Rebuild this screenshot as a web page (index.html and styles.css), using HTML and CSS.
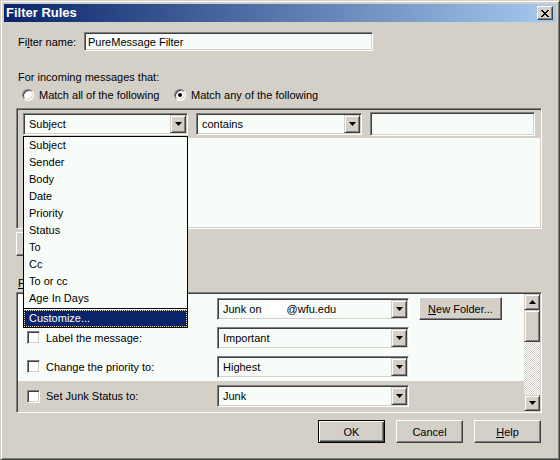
FILE: index.html
```html
<!DOCTYPE html>
<html>
<head>
<meta charset="utf-8">
<title>Filter Rules</title>
<link rel="stylesheet" href="styles.css">
</head>
<body>
<div class="window">
  <div class="titlebar">
    <span class="title">Filter Rules</span>
    <span class="close"><svg width="8" height="7" viewBox="0 0 8 7"><path d="M0 0h2v1H0z M6 0h2v1H6z M1 1h2v1H1z M5 1h2v1H5z M2 2h4v1H2z M3 3h2v1H3z M2 4h4v1H2z M1 5h2v1H1z M5 5h2v1H5z M0 6h2v1H0z M6 6h2v1H6z" fill="#000"/></svg></span>
  </div>
  <div class="content">
    <div class="name-row">
      <label class="name-label">Fi<u>l</u>ter name:</label>
      <div class="field name-field">PureMessage Filter</div>
    </div>
    <div class="incoming">For incoming messages that:</div>
    <div class="radios">
      <span class="radio-item first"><span class="radio"></span>Match all of the following</span>
      <span class="radio-item"><span class="radio checked"></span>Match any of the following</span>
    </div>
    <div class="panel criteria">
      <div class="crit-row">
        <div class="field combo w165"><span class="val">Subject</span><span class="arrow"><svg width="7" height="4" viewBox="0 0 7 4"><path d="M0 0h7L3.5 4z" fill="#000"/></svg></span></div>
        <div class="field combo w166"><span class="val">contains</span><span class="arrow"><svg width="7" height="4" viewBox="0 0 7 4"><path d="M0 0h7L3.5 4z" fill="#000"/></svg></span></div>
        <div class="field textbox"></div>
      </div>
      <div class="crit-list"></div>
    </div>
    <div class="more-row">
      <span class="btn more">More</span>
      <span class="btn more">Fewer</span>
    </div>
    <div class="actions-label"><u>P</u>erform these actions:</div>
    <div class="panel actions">
      <div class="rows">
        <div class="arow">
          <div class="acell"><span class="check"></span><span>Move to folder:</span></div>
          <div class="field combo w192"><span class="val">Junk on <span class="redact"></span> @wfu.edu</span><span class="arrow"><svg width="7" height="4" viewBox="0 0 7 4"><path d="M0 0h7L3.5 4z" fill="#000"/></svg></span></div>
          <span class="btn newfolder"><span><u>N</u>ew Folder...</span></span>
        </div>
        <div class="arow">
          <div class="acell"><span class="check"></span><span>Label the message:</span></div>
          <div class="field combo w192"><span class="val">Important</span><span class="arrow"><svg width="7" height="4" viewBox="0 0 7 4"><path d="M0 0h7L3.5 4z" fill="#000"/></svg></span></div>
        </div>
        <div class="arow">
          <div class="acell"><span class="check"></span><span>Change the priority to:</span></div>
          <div class="field combo w192"><span class="val">Highest</span><span class="arrow"><svg width="7" height="4" viewBox="0 0 7 4"><path d="M0 0h7L3.5 4z" fill="#000"/></svg></span></div>
        </div>
        <div class="arow sel">
          <div class="acell"><span class="check"></span><span>Set Junk Status to:</span></div>
          <div class="field combo w192"><span class="val">Junk</span><span class="arrow"><svg width="7" height="4" viewBox="0 0 7 4"><path d="M0 0h7L3.5 4z" fill="#000"/></svg></span></div>
        </div>
      </div>
      <div class="scrollbar">
        <span class="sb-btn"><svg width="7" height="4" viewBox="0 0 7 4"><path d="M3.5 0L7 4H0z" fill="#000"/></svg></span>
        <span class="thumb"></span>
        <span class="track"></span>
        <span class="sb-btn"><svg width="7" height="4" viewBox="0 0 7 4"><path d="M0 0h7L3.5 4z" fill="#000"/></svg></span>
      </div>
    </div>
    <div class="buttons">
      <span class="btn dlg default">OK</span>
      <span class="btn dlg">Cancel</span>
      <span class="btn dlg"><span><u>H</u>elp</span></span>
    </div>
  </div>
  <div class="dropdown">
    <div class="item">Subject</div>
    <div class="item">Sender</div>
    <div class="item">Body</div>
    <div class="item">Date</div>
    <div class="item">Priority</div>
    <div class="item">Status</div>
    <div class="item">To</div>
    <div class="item">Cc</div>
    <div class="item">To or cc</div>
    <div class="item">Age In Days</div>
    <div class="sep"></div>
    <div class="item hl">Customize...</div>
  </div>
</div>
</body>
</html>
```
FILE: styles.css
```css
* { box-sizing: border-box; }
html, body { margin: 0; padding: 0; }
body {
  width: 560px;
  height: 460px;
  overflow: hidden;
  background: #d4d0c8;
  font-family: "Liberation Sans", Arial, sans-serif;
  font-size: 11px;
  line-height: 14px;
  color: #000;
}
u { text-decoration: underline; text-underline-offset: 1px; }

.window {
  position: relative;
  width: 560px;
  height: 460px;
  background: #d4d0c8;
  border: 1px solid;
  border-color: #d4d0c8 #404040 #404040 #d4d0c8;
  box-shadow: inset 1px 1px #fff, inset -1px -1px #808080;
  padding: 3px;
}

.titlebar {
  height: 18px;
  background: linear-gradient(to right, #0a246a, #a6caf0);
  display: flex;
  align-items: center;
  justify-content: space-between;
  padding: 0 3px 0 2px;
}
.title {
  color: #fff;
  font-weight: bold;
  font-size: 13px;
}
.close {
  width: 16px;
  height: 14px;
  background: #d4d0c8;
  border: 1px solid;
  border-color: #fff #404040 #404040 #fff;
  box-shadow: inset -1px -1px #808080;
  display: flex;
  align-items: center;
  justify-content: center;
  padding-right: 1px;
}
.close svg { display: block; }

.content { padding: 0 0 0 12px; }

.field {
  background: #f8fcf8;
  border: 1px solid;
  border-color: #808080 #fff #fff #808080;
  box-shadow: inset 1px 1px #404040, inset -1px -1px #d4d0c8;
}

.name-row {
  display: flex;
  align-items: center;
  margin-top: 10px;
  padding-left: 2px;
}
.name-label { width: 66px; }
.name-field {
  width: 289px;
  height: 19px;
  padding-left: 3px;
  display: flex;
  align-items: center;
}

.incoming {
  margin-top: 19px;
  padding-left: 2px;
  height: 14px;
}

.radios {
  margin-top: 4px;
  height: 14px;
  display: flex;
  align-items: center;
  padding-left: 6px;
}
.radio-item {
  display: flex;
  align-items: center;
  gap: 5px;
}
.radio-item.first { width: 152px; }
.radio {
  position: relative;
  width: 12px;
  height: 12px;
  border-radius: 50%;
  background: #fff;
  border: 1px solid;
  border-color: #808080 #fff #fff #808080;
  box-shadow: inset 1px 1px #404040, inset -1px -1px #d4d0c8;
}
.radio.checked::after {
  content: "";
  position: absolute;
  left: 3px;
  top: 3px;
  width: 4px;
  height: 4px;
  border-radius: 50%;
  background: #000;
}

.panel {
  width: 526px;
  height: 121px;
  border: 1px solid;
  border-color: #808080 #fff #fff #808080;
  box-shadow: inset 1px 1px #404040, inset -1px -1px #d4d0c8;
  padding: 1px;
}
.criteria { margin-top: 6px; background: #d4d0c8; }
.crit-row {
  height: 28px;
  display: flex;
  align-items: center;
  gap: 8px;
  padding-left: 5px;
}
.crit-list {
  height: 89px;
  margin-left: 5px;
  background: #f8fcf8;
}

.combo {
  height: 22px;
  display: flex;
  align-items: stretch;
  padding: 1px 1px 1px 5px;
}
.combo .val {
  flex: 1;
  display: flex;
  align-items: center;
  white-space: nowrap;
  overflow: hidden;
}
.combo .arrow {
  width: 16px;
  background: #d4d0c8;
  border: 1px solid;
  border-color: #d4d0c8 #404040 #404040 #d4d0c8;
  box-shadow: inset 1px 1px #fff, inset -1px -1px #808080;
  display: flex;
  align-items: center;
  justify-content: center;
}
.combo .arrow svg, .sb-btn svg { display: block; }
.w165 { width: 165px; }
.w166 { width: 166px; }
.w192 { width: 192px; }
.textbox { width: 165px; height: 24px; }
.redact {
  display: inline-block;
  width: 25px;
  height: 13px;
  background: #fff;
  vertical-align: middle;
}

.btn {
  display: flex;
  align-items: center;
  justify-content: center;
  background: #d4d0c8;
  border: 1px solid;
  border-color: #fff #404040 #404040 #fff;
  box-shadow: inset -1px -1px #808080;
  white-space: nowrap;
}

.more-row {
  margin-top: 3px;
  height: 24px;
  display: flex;
  gap: 6px;
}
.btn.more { width: 75px; height: 24px; }

.actions-label {
  margin-top: 20px;
  height: 14px;
  padding-left: 2px;
}

.actions {
  margin-top: 2px;
  display: flex;
  background: #f8fcf8;
}
.rows {
  flex: 1;
  display: flex;
  flex-direction: column;
  background: #f8fcf8;
}
.arow {
  height: 29px;
  display: flex;
  align-items: center;
}
.arow.sel {
  flex: 1;
  background: #d4d0c8;
}
.acell {
  width: 199px;
  padding-left: 9px;
  display: flex;
  align-items: center;
  gap: 6px;
  white-space: nowrap;
}
.check {
  width: 13px;
  height: 13px;
  background: #fff;
  border: 1px solid;
  border-color: #808080 #fff #fff #808080;
  box-shadow: inset 1px 1px #404040, inset -1px -1px #d4d0c8;
  flex: none;
}
.btn.newfolder {
  width: 83px;
  height: 23px;
  margin-left: 10px;
}

.scrollbar {
  width: 16px;
  display: flex;
  flex-direction: column;
}
.sb-btn {
  height: 16px;
  display: flex;
  align-items: center;
  justify-content: center;
  background: #d4d0c8;
  border: 1px solid;
  border-color: #d4d0c8 #404040 #404040 #d4d0c8;
  box-shadow: inset 1px 1px #fff, inset -1px -1px #808080;
}
.thumb {
  height: 32px;
  background: #d4d0c8;
  border: 1px solid;
  border-color: #d4d0c8 #404040 #404040 #d4d0c8;
  box-shadow: inset 1px 1px #fff, inset -1px -1px #808080;
}
.track {
  flex: 1;
  background-image: repeating-conic-gradient(#fff 0 25%, #d4d0c8 0 50%);
  background-size: 2px 2px;
}

.buttons {
  margin-top: 7px;
  padding-right: 15px;
  display: flex;
  justify-content: flex-end;
  gap: 11px;
}
.btn.dlg { width: 67px; height: 23px; }
.btn.default {
  border-color: #000;
  box-shadow: inset 1px 1px #fff, inset -1px -1px #404040, inset -2px -2px #808080;
}

.dropdown {
  position: absolute;
  left: 22px;
  top: 135px;
  width: 165px;
  background: #f8fcf8;
  border: 1px solid #000;
}
.dropdown .item {
  height: 17px;
  line-height: 17px;
  padding-left: 5px;
}
.dropdown .sep {
  height: 1px;
  margin: 1px 0;
  background: #000;
}
.dropdown .item.hl {
  background: #0a246a;
  color: #fff;
  outline: 1px dotted #f5db95;
  outline-offset: -1px;
  padding-left: 5px;
}
```
